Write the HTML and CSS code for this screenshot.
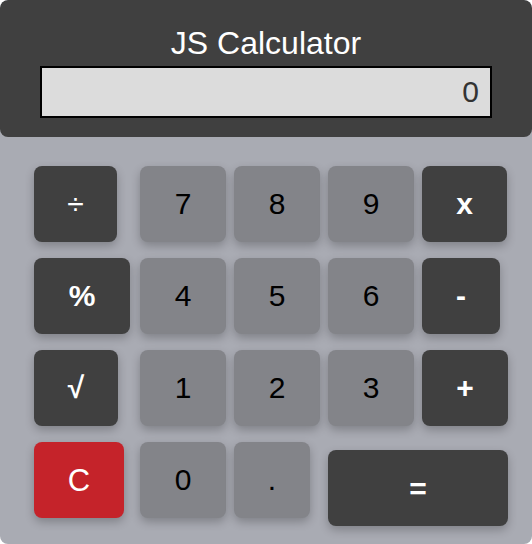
FILE: index.html
```html
<!DOCTYPE html>
<html lang="en">
<head>
<meta charset="utf-8">
<title>JS Calculator</title>
<link rel="stylesheet" href="styles.css">
</head>
<body>
<div class="calc">
  <header class="calc-head">
    <h1 class="title">JS Calculator</h1>
    <div class="display">0</div>
  </header>
  <div class="keys">
    <button class="key op light w83">÷</button>
    <button class="key num">7</button>
    <button class="key num">8</button>
    <button class="key num">9</button>
    <button class="key op w85">x</button>

    <button class="key op w96">%</button>
    <button class="key num">4</button>
    <button class="key num">5</button>
    <button class="key num">6</button>
    <button class="key op w78">-</button>

    <button class="key op w84">√</button>
    <button class="key num">1</button>
    <button class="key num">2</button>
    <button class="key num">3</button>
    <button class="key op w86">+</button>

    <button class="key clear w90">C</button>
    <button class="key num">0</button>
    <button class="key num w76">.</button>
    <button class="key op equals">=</button>
  </div>
</div>
</body>
</html>
```

FILE: styles.css
```css
html, body {
  margin: 0;
  padding: 0;
  background: #ffffff;
}

body {
  font-family: "Liberation Sans", Arial, Helvetica, sans-serif;
}

.calc {
  width: 532px;
  height: 544px;
  background: #a9abb3;
  border-radius: 8px;
  overflow: hidden;
  box-sizing: border-box;
}

.calc-head {
  background: #404040;
  border-radius: 8px;
  height: 137px;
  box-sizing: border-box;
  padding-top: 25px;
}

.title {
  margin: 0;
  text-align: center;
  color: #ffffff;
  font-size: 32px;
  font-weight: normal;
  line-height: 37px;
}

.display {
  margin: 4px 40px 0 40px;
  height: 52px;
  box-sizing: border-box;
  border: 2px solid #000000;
  background: #dcdcdc;
  color: #333333;
  font-size: 30px;
  line-height: 48px;
  text-align: right;
  padding-right: 11px;
}

.keys {
  display: grid;
  grid-template-columns: 98px 86px 86px 86px 86px;
  grid-auto-rows: 76px;
  column-gap: 8px;
  row-gap: 16px;
  padding: 29px 0 0 34px;
}

.key {
  justify-self: start;
  width: 86px;
  height: 76px;
  border: none;
  border-radius: 8px;
  padding: 0;
  margin: 0;
  font-family: inherit;
  font-size: 30px;
  line-height: 1;
  box-shadow: 0 4px 10px rgba(0, 0, 0, 0.24);
  cursor: pointer;
}

.num {
  background: #838489;
  color: #000000;
  font-weight: normal;
}

.op {
  background: #404040;
  color: #ffffff;
  font-weight: bold;
}

.op.light {
  font-weight: normal;
}

.clear {
  background: #c5232a;
  color: #ffffff;
  font-weight: normal;
  font-size: 31px;
}

.equals {
  grid-column: 4 / span 2;
  width: 180px;
  margin-top: 8px;
  padding-top: 2px;
}

.w76 { width: 76px; }
.w78 { width: 78px; }
.w83 { width: 83px; }
.w84 { width: 84px; }
.w85 { width: 85px; }
.w86 { width: 86px; }
.w90 { width: 90px; }
.w96 { width: 96px; }
```
